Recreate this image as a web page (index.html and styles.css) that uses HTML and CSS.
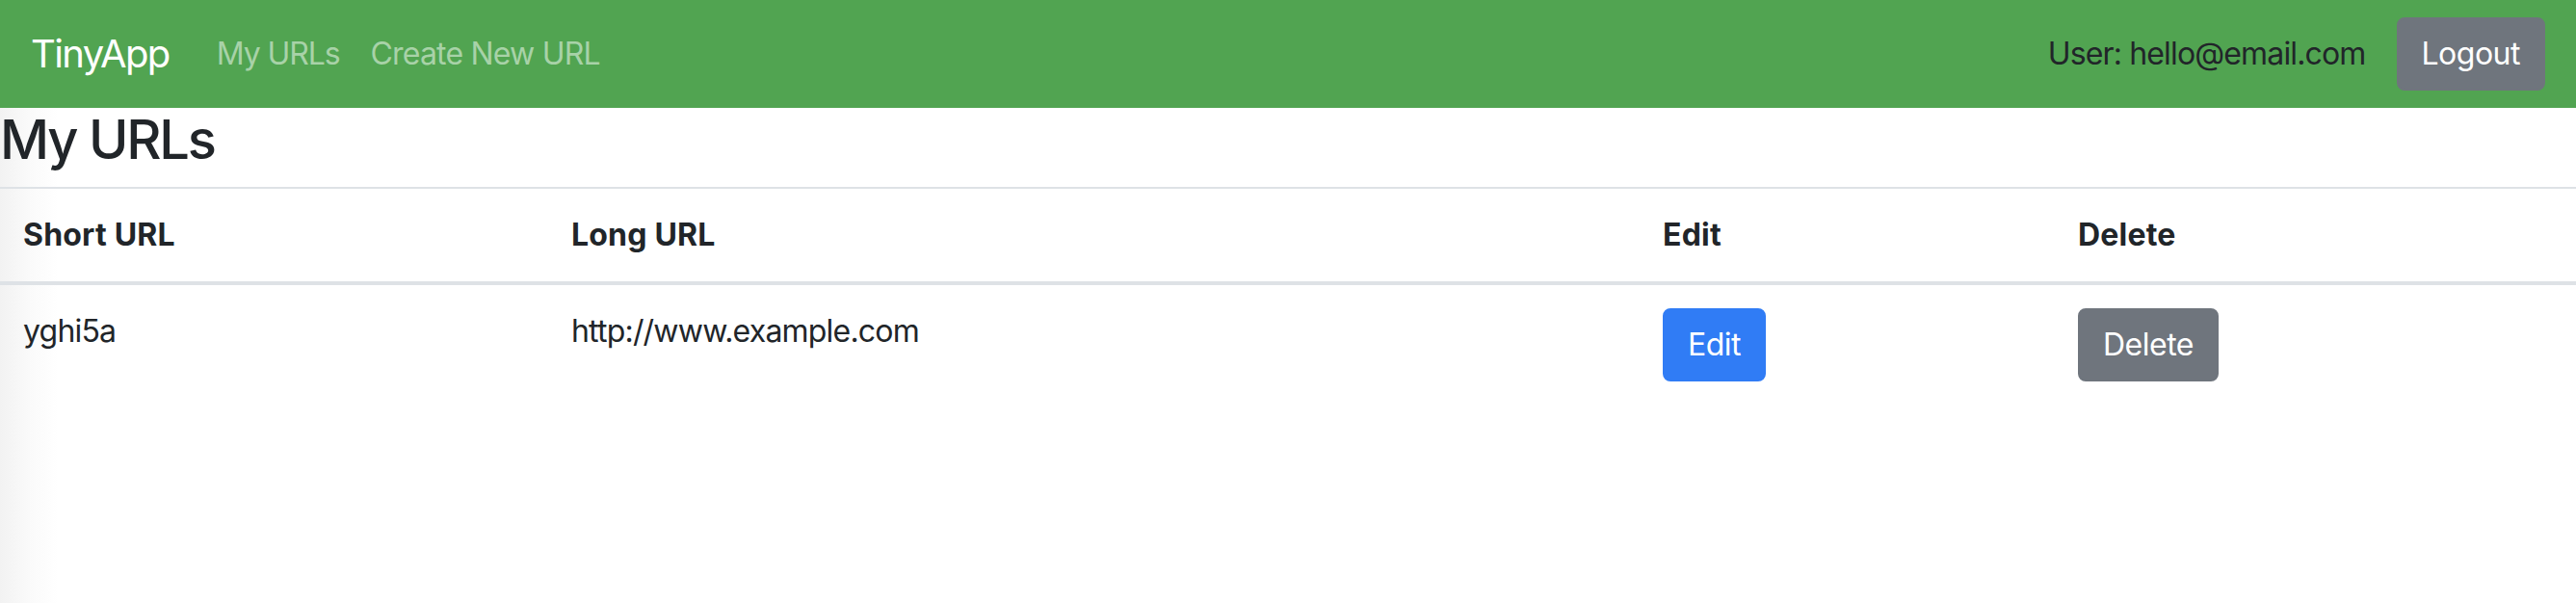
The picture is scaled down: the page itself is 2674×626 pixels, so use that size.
FILE: index.html
```html
<!DOCTYPE html>
<html lang="en">
<head>
<meta charset="utf-8">
<title>TinyApp</title>
<link rel="stylesheet" href="styles.css">
</head>
<body>
<nav class="navbar">
  <div class="nav-left">
    <a class="brand" href="#">TinyApp</a>
    <a class="nav-link" href="#">My URLs</a>
    <a class="nav-link nav-link-wide" href="#">Create New URL</a>
  </div>
  <div class="nav-right">
    <span class="user-text">User: hello@email.com</span>
    <button class="btn btn-secondary">Logout</button>
  </div>
</nav>
<main class="content">
  <h2 class="title">My URLs</h2>
  <table class="url-table">
    <colgroup>
      <col class="col-short">
      <col class="col-long">
      <col class="col-edit">
      <col class="col-delete">
    </colgroup>
    <thead>
      <tr>
        <th>Short URL</th>
        <th>Long URL</th>
        <th>Edit</th>
        <th>Delete</th>
      </tr>
    </thead>
    <tbody>
      <tr>
        <td>yghi5a</td>
        <td>http://www.example.com</td>
        <td><button class="btn btn-primary">Edit</button></td>
        <td><button class="btn btn-secondary">Delete</button></td>
      </tr>
    </tbody>
  </table>
</main>
</body>
</html>
```
FILE: styles.css
```css
* { box-sizing: border-box; }

html, body {
  margin: 0;
  padding: 0;
}

body {
  font-family: Inter, "Liberation Sans", Arial, sans-serif;
  font-size: 32px;
  line-height: 1.5;
  color: #212529;
  background: linear-gradient(to right, #f2f2f2 0, #fafafa 30px, #ffffff 60px) #ffffff;
  min-height: 626px;
}

.navbar {
  height: 112px;
  background: #51a451;
  padding: 0 32px;
  display: flex;
  align-items: center;
  justify-content: space-between;
}

.nav-left {
  display: flex;
  align-items: center;
}

.brand {
  font-size: 40px;
  color: #ffffff;
  text-decoration: none;
  margin-right: 33px;
  letter-spacing: -1.6px;
}

.nav-link {
  color: #a8d2a8;
  text-decoration: none;
  padding: 0 16px;
  letter-spacing: -1.1px;
}

.nav-link-wide {
  letter-spacing: -0.8px;
}

.nav-right {
  display: flex;
  align-items: center;
  gap: 32px;
}

.user-text {
  color: #212529;
  letter-spacing: -0.85px;
}

.btn {
  font-family: inherit;
  font-size: 32px;
  line-height: 48px;
  padding: 12px 24px;
  border: 2px solid transparent;
  border-radius: 8px;
  color: #ffffff;
  cursor: pointer;
  letter-spacing: -0.5px;
}

.btn-secondary {
  background: #6f757d;
  border-color: #6f757d;
}

.btn-primary {
  background: #307cf5;
  border-color: #307cf5;
}

.content {
  padding: 0;
}

.title {
  font-size: 56px;
  font-weight: 500;
  line-height: 1.2;
  margin: 0 0 15px 0;
  letter-spacing: -2.2px;
}

.url-table {
  width: 100%;
  border-collapse: collapse;
  table-layout: fixed;
}

.col-short { width: 569px; }
.col-long { width: 1133px; }
.col-edit { width: 431px; }
.col-delete { width: 541px; }

.url-table th,
.url-table td {
  text-align: left;
  vertical-align: top;
  padding: 24px;
  border-top: 2px solid #dee2e6;
}

.url-table th {
  font-weight: 700;
  border-bottom: 4px solid #dee2e6;
  letter-spacing: 0.2px;
}

.url-table td {
  border-top: none;
  letter-spacing: -0.8px;
}
```
